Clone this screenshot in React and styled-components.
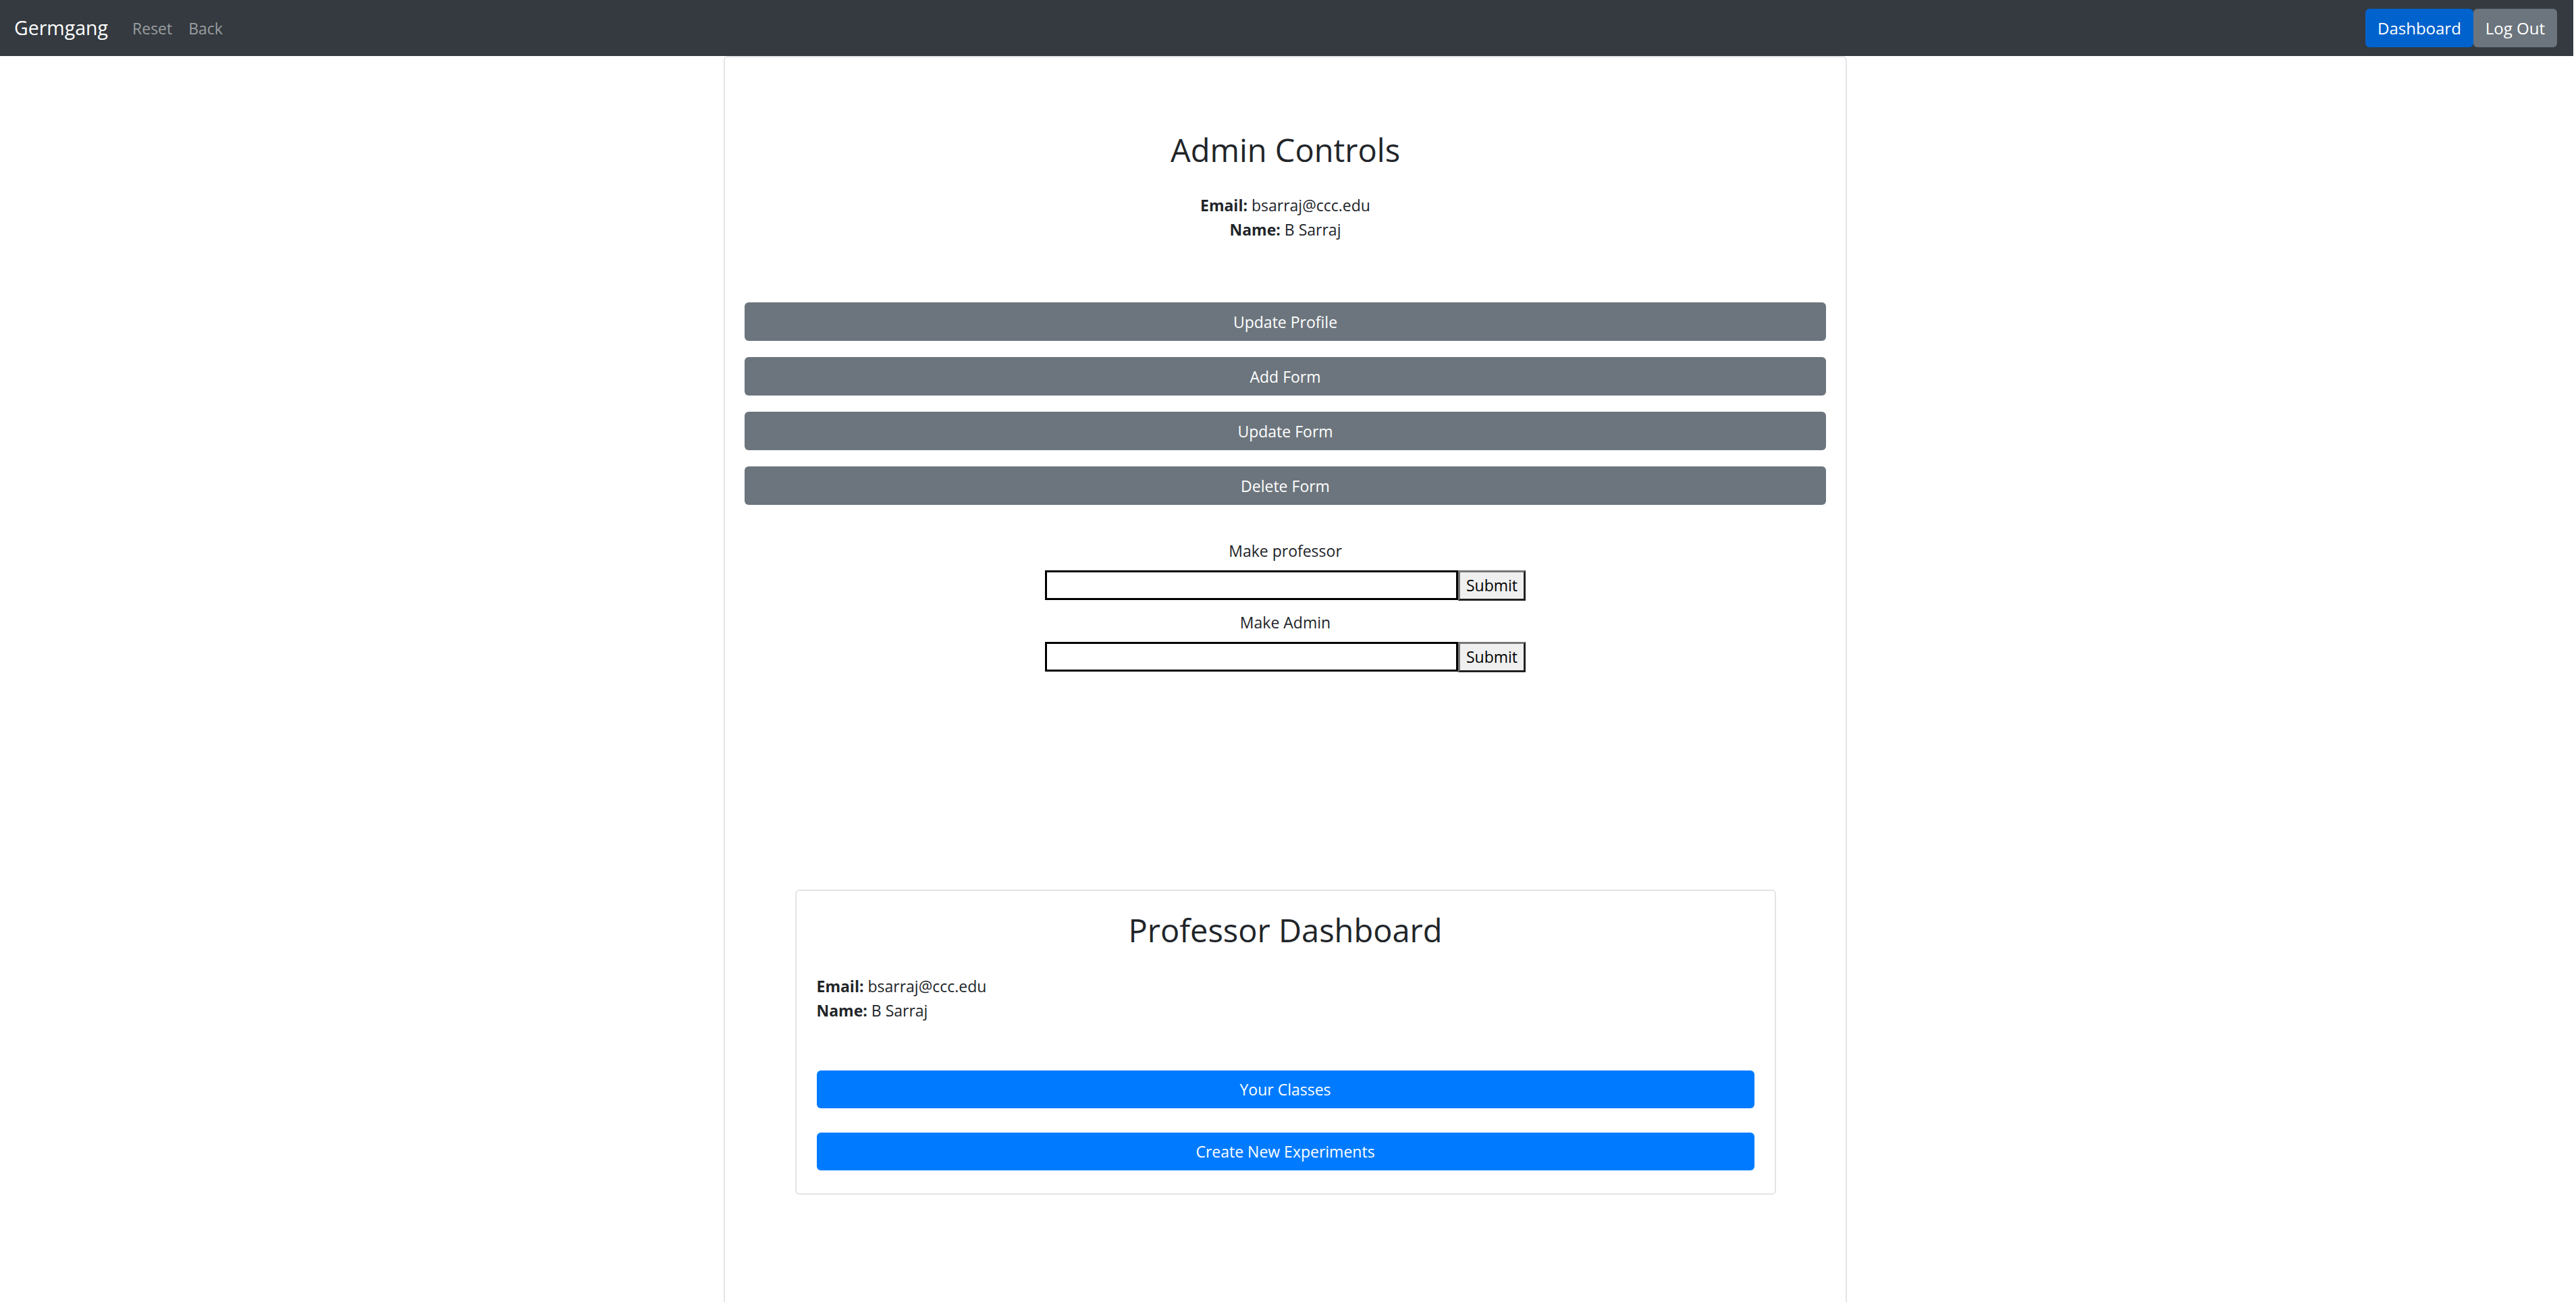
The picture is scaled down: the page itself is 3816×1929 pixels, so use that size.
import React from 'react'
import styled, { createGlobalStyle } from 'styled-components'

const COLORS = {
  TEXT: '#212529',
  NAV_BG: '#343a40',
  GRAY: '#6c757d',
  BLUE: '#007bff',
  BLUE_DARK: '#0062cc',
  BORDER: '#e2e4e7',
}

const GlobalStyle = createGlobalStyle`
  html, body {
    margin: 0;
    padding: 0;
    background: #fff;
    overflow: hidden;
  }
  body {
    font-family: "Open Sans", "Noto Sans", sans-serif;
    font-size: 23px;
    line-height: 36px;
    color: ${COLORS.TEXT};
  }
  * {
    box-sizing: border-box;
  }
`

const Page = styled.div`
  width: calc(100vw - 4px);
  min-height: 100vh;
  display: flex;
  flex-direction: column;
`

const Navbar = styled.nav`
  height: 83px;
  background: ${COLORS.NAV_BG};
  display: flex;
  align-items: center;
  padding: 0 24px 0 21px;
`

const Brand = styled.a`
  font-size: 28.5px;
  line-height: 45px;
  color: #fff;
  margin-right: 24px;
`

const NavLink = styled.a`
  color: rgba(255, 255, 255, 0.5);
  padding: 0 12px;
`

const NavActions = styled.div`
  margin-left: auto;
  display: flex;
`

const NavButton = styled.button`
  font: inherit;
  font-size: 24px;
  height: 57px;
  padding: 0 18px;
  border: none;
  border-radius: 6px;
  color: #fff;
  background: ${props => props.$variant === 'primary' ? COLORS.BLUE_DARK : COLORS.GRAY};
`

const Main = styled.main`
  flex: 1;
  width: 1664px;
  margin-left: calc(50% - 834px);
  border: 2px solid ${COLORS.BORDER};
  border-bottom: none;
  border-radius: 6px 6px 0 0;
  padding: 0 29px;
`

const Section = styled.section`
  text-align: center;
`

const Title = styled.h2`
  margin: 0;
  font-size: 47px;
  line-height: 56.4px;
  font-weight: 500;
  padding-top: ${props => props.$top || 0}px;
`

const Info = styled.div`
  margin-top: ${props => props.$top}px;
  text-align: ${props => props.$align || 'center'};
`

const ButtonStack = styled.div`
  display: flex;
  flex-direction: column;
  gap: ${props => props.$gap}px;
  margin-top: ${props => props.$top}px;
`

const BlockButton = styled.button`
  font: inherit;
  width: 100%;
  height: ${props => props.$height}px;
  border: none;
  border-radius: 6px;
  color: #fff;
  background: ${props => props.$variant === 'primary' ? COLORS.BLUE : COLORS.GRAY};
`

const RoleForms = styled.div`
  margin-top: 50px;
  display: flex;
  flex-direction: column;
  align-items: center;
`

const FormLabel = styled.label`
  display: block;
  margin-bottom: 11px;
`

const FormRow = styled.form`
  display: flex;
  margin: 0 0 14px;
`

const TextInput = styled.input`
  width: 612px;
  height: 44px;
  border: 3px solid #000;
  font: inherit;
  padding: 0 3px;
`

const SubmitButton = styled.button`
  width: 100px;
  height: 45px;
  font: inherit;
  font-size: 23px;
  line-height: 1;
  color: #000;
  background: #efefef;
  border-style: solid;
  border-width: 3px;
  border-color: #767676 #222 #222 #767676;
  padding: 0;
`

const Card = styled.div`
  width: 1453px;
  margin: 308px auto 0;
  border: 2px solid ${COLORS.BORDER};
  border-radius: 6px;
  padding: 30px 30px 34px;
`

const ROLE_FORMS = ['Make professor', 'Make Admin']

const App = () => {
  return (
    <Page>
      <GlobalStyle />
      <Navbar>
        <Brand>Germgang</Brand>
        <NavLink>Reset</NavLink>
        <NavLink>Back</NavLink>
        <NavActions>
          <NavButton $variant="primary">Dashboard</NavButton>
          <NavButton>Log Out</NavButton>
        </NavActions>
      </Navbar>
      <Main>
        <Section>
          <Title $top={109}>Admin Controls</Title>
          <Info $top={36}>
            <div><b>Email:</b> bsarraj@ccc.edu</div>
            <div><b>Name:</b> B Sarraj</div>
          </Info>
          <ButtonStack $top={90} $gap={24}>
            <BlockButton $height={57}>Update Profile</BlockButton>
            <BlockButton $height={57}>Add Form</BlockButton>
            <BlockButton $height={57}>Update Form</BlockButton>
            <BlockButton $height={57}>Delete Form</BlockButton>
          </ButtonStack>
          <RoleForms>
            {ROLE_FORMS.map(label => (
              <div key={label}>
                <FormLabel>{label}</FormLabel>
                <FormRow onSubmit={e => e.preventDefault()}>
                  <TextInput type="text" />
                  <SubmitButton type="submit">Submit</SubmitButton>
                </FormRow>
              </div>
            ))}
          </RoleForms>
        </Section>
        <Card>
          <Section>
            <Title>Professor Dashboard</Title>
          </Section>
          <Info $top={36} $align="left">
            <div><b>Email:</b> bsarraj@ccc.edu</div>
            <div><b>Name:</b> B Sarraj</div>
          </Info>
          <ButtonStack $top={71} $gap={36}>
            <BlockButton $height={56} $variant="primary">Your Classes</BlockButton>
            <BlockButton $height={56} $variant="primary">Create New Experiments</BlockButton>
          </ButtonStack>
        </Card>
      </Main>
    </Page>
  )
}

export default App
